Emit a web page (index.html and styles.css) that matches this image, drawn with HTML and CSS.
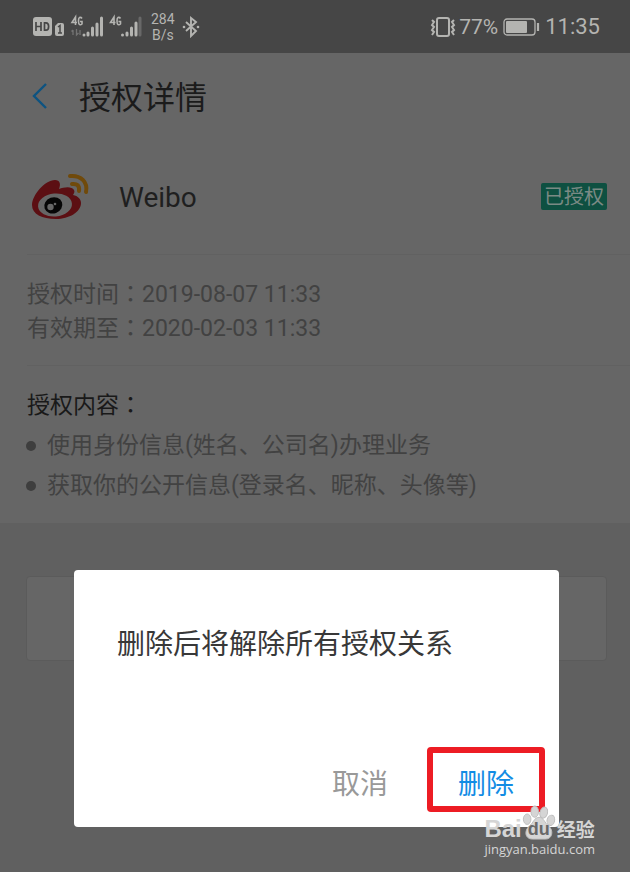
FILE: index.html
```html
<!DOCTYPE html>
<html lang="zh-CN">
<head>
<meta charset="utf-8">
<meta name="viewport" content="width=device-width, initial-scale=1">
<title>授权详情</title>
<link rel="stylesheet" href="styles.css">
</head>
<body>
<div class="statusbar">
  <div class="status-group">
    <svg class="signals" width="112" height="28" viewBox="0 0 112 28" aria-hidden="true">
      <rect x="1" y="4" width="19" height="19" rx="3" fill="#b4b4b1"/>
      <path d="M4 9v9M9 9v9M4 13.500h5M12.500 9v8.200h1.500c3.500 0 3.500-7.400 0-7.400h-1.500" fill="none" stroke="#464646" stroke-width="1.700"/>
      <path d="M23 13l3-3h4q2 0 2 2v9q0 2-2 2h-5q-2 0-2-2z" fill="#b4b4b1"/>
      <path d="M26 14l2-1.500V20M26 20h4" fill="none" stroke="#464646" stroke-width="1.500"/>
      <g fill="none" stroke="#b4b4b1" stroke-width="1.600">
        <path d="M43.500 12V4L40 9.500h5M50 5.500q-1-1.500-2.500-1Q46.500 5 46.500 8t1 3.500q2 .500 2.500-.500V8.500h-2"/>
        <path d="M82 12V4l-3.500 5.500h5M88.500 5.500q-1-1.500-2.500-1Q85 5 85 8t1 3.500q2 .500 2.500-.500V8.500h-2"/>
      </g>
      <g fill="none" stroke-width="3" stroke="#b4b4b1" stroke-linecap="round">
        <path d="M52 22v0M56 22v-2M60.500 22v-7M65 22V11M69.500 22V5"/>
        <path d="M90.500 22v0M95 22v-2M99.500 22v-7M104 22V10"/>
        <path d="M108 22V5" stroke="#686868"/>
      </g>
      <path d="M41 17v5M39.500 18.500L41 17M44.500 16v6l2-2M48 17v5" fill="none" stroke="#737373" stroke-width="1.300"/>
    </svg>
    <span class="speed">284<br>B/s</span>
    <svg width="18" height="22" viewBox="0 0 18 22" aria-hidden="true">
      <path d="M4 6l10 9-5 5V2l5 4-10 9" fill="none" stroke="#b4b4b1" stroke-width="1.900"/>
      <circle cx="2" cy="11" r="1.300" fill="#b4b4b1"/><circle cx="16" cy="11" r="1.300" fill="#b4b4b1"/>
    </svg>
  </div>
  <div class="status-group">
    <svg width="26" height="22" viewBox="0 0 26 22" fill="none" stroke="#b4b4b1" aria-hidden="true">
      <rect x="7" y="2" width="12" height="18" rx="2" stroke-width="2"/>
      <path d="M2 4l2 2-2 3 2 2-2 3 2 2-2 3M24 4l-2 2 2 3-2 2 2 3-2 2 2 3" stroke-width="2"/>
    </svg>
    <span class="battery-level">77%</span>
    <svg class="battery" width="37" height="20" viewBox="0 0 37 20" aria-hidden="true">
      <rect x="1" y="2" width="31" height="16" rx="3" fill="none" stroke="#b4b4b1" stroke-width="1.300"/>
      <rect x="3" y="4" width="21" height="12" rx="1" fill="#b4b4b1"/>
      <path d="M35 6v8" stroke="#b4b4b1" stroke-width="2.200"/>
    </svg>
    <span class="clock">11:35</span>
  </div>
</div>

<main class="detail">
  <header class="titlebar">
    <button class="back" type="button" aria-label="返回">
      <svg width="18" height="28" viewBox="0 0 18 28" aria-hidden="true"><path d="M15 2L3 14l12 12" fill="none" stroke="#0d5381" stroke-width="2.400"/></svg>
    </button>
    <h1>授权详情</h1>
  </header>

  <section class="app">
    <svg class="logo" width="60" height="48" viewBox="0 0 60 48" aria-hidden="true">
      <path d="M1 32C1 22 14 7 24 7c5 0 6 4 4 9 5-2 13-3 15 1 1 2 0 3-1 5 5 1 8 4 8 8 0 9-12 16-25 16C11 46 1 41 1 32z" fill="#5c0f13"/>
      <ellipse cx="24" cy="32" rx="17" ry="11.500" transform="rotate(-5 24 32)" fill="#666"/>
      <ellipse cx="22.500" cy="32.500" rx="9.200" ry="8" transform="rotate(-20 22 33)" fill="#060606"/>
      <circle cx="19.500" cy="34" r="3.200" fill="#666"/><circle cx="24" cy="31" r="1.300" fill="#666"/>
      <path d="M39 3c11-1 18 6 16 16M41 11q8-1 7 7" fill="none" stroke="#704a0b" stroke-width="4" stroke-linecap="round"/>
    </svg>
    <h2>Weibo</h2>
    <span class="badge">已授权</span>
  </section>

  <section class="dates">
    <p>授权时间<span class="colon" lang="zh-TW">：</span>2019-08-07 11:33</p>
    <p>有效期至<span class="colon" lang="zh-TW">：</span>2020-02-03 11:33</p>
  </section>

  <section class="scope">
    <h3>授权内容<span class="colon" lang="zh-TW">：</span></h3>
    <ul>
      <li>使用身份信息(姓名、公司名)办理业务</li>
      <li>获取你的公开信息(登录名、昵称、头像等)</li>
    </ul>
  </section>
</main>

<div class="under-card"></div>

<div class="dialog" role="dialog" aria-labelledby="dialog-text">
  <p id="dialog-text">删除后将解除所有授权关系</p>
  <div class="actions">
    <button class="cancel" type="button">取消</button>
    <button class="delete" type="button">删除</button>
  </div>
</div>

<div class="watermark">
  <div class="brand">
    <span class="bai">Bai</span>
    <span class="paw">
      <svg width="34" height="36" viewBox="0 0 34 38" aria-hidden="true">
        <g fill="#d5d5d5" stroke="#bdbdbd">
          <ellipse cx="4.500" cy="15" rx="4" ry="5.500"/><ellipse cx="12.500" cy="7" rx="4" ry="6"/>
          <ellipse cx="22" cy="8" rx="4" ry="6" transform="rotate(15 22 8)"/><ellipse cx="29.500" cy="16" rx="4" ry="5.500" transform="rotate(15 29 16)"/>
          <path d="M17 13c5 0 6 6 10 9 6 5 4 14-3 14H10c-8 0-9-9-3-14 4-3 5-9 10-9z"/>
        </g>
      </svg>
      <span class="du">du</span>
    </span>
    <span class="jingyan">经验</span>
  </div>
  <div class="site">jingyan.baidu.com</div>
</div>
</body>
</html>
```
FILE: styles.css
```css
* { box-sizing: border-box; }
body {
  position: relative;
  margin: 0;
  min-height: 100vh;
  background: #606060;
  color: #424242;
  font-family: Roboto, "Noto Sans CJK SC", sans-serif;
}
h1, h2, h3, p, ul { margin: 0; padding: 0; font-weight: 400; }
button {
  padding: 0;
  border: 0;
  background: none;
  font: inherit;
}
svg { display: block; }

.statusbar {
  display: flex;
  justify-content: space-between;
  height: 53px;
  padding: 0 30px 0 32px;
  background: #464646;
  color: #b4b4b1;
}
.status-group { display: flex; align-items: center; }
.speed {
  margin: 0 7px;
  font-size: 14px;
  line-height: 16px;
  text-align: center;
}
.battery-level { margin-left: 3px; font-size: 21px; }
.battery { margin: 0 5px; }
.clock { font-size: 22px; }

.detail { padding-bottom: 17px; background: #666; }
.titlebar {
  display: flex;
  align-items: center;
  height: 86px;
  padding-left: 31px;
  color: #1b1b1b;
}
.back { margin-right: 30px; }
h1 { padding-top: 4px; font-size: 32px; line-height: 48px; }

.app {
  display: flex;
  align-items: center;
  height: 116px;
  margin-left: 27px;
  padding: 0 23px 0 4px;
  border-bottom: 1px solid #616161;
}
h2 {
  flex: 1;
  margin-left: 28px;
  padding-top: 2px;
  color: #1f1f1f;
  font-size: 28px;
}
.badge {
  padding: 2px 3px 0;
  border-radius: 2px;
  background: #0e5041;
  color: #7a8a84;
  font-size: 20px;
  line-height: 25px;
}

.dates {
  margin-left: 27px;
  padding: 23px 0 19px;
  border-bottom: 1px solid #616161;
  font-size: 23px;
  line-height: 34px;
}
.colon {
  font-family: "Noto Sans CJK TC", sans-serif;
  line-height: 1;
}

.scope {
  padding: 20px 27px 0;
  font-size: 23px;
  line-height: 40px;
}
h3 { color: #191919; font-size: 23px; }
ul { list-style: none; }
li { display: flex; align-items: center; }
li::before {
  content: "";
  width: 10px;
  height: 10px;
  margin: 0 11px 0 -1px;
  border-radius: 50%;
  background: #3e3e3e;
}

.under-card {
  height: 85px;
  margin: 53px 23px 0 26px;
  border: 1px solid #5b5b5b;
  border-radius: 4px;
  background: #666;
}

.dialog {
  position: absolute;
  top: 570px;
  left: 74px;
  right: 71px;
  padding: 55px 14px 15px 43px;
  border-radius: 4px;
  background: #fff;
  color: #383838;
  font-size: 28px;
  line-height: 40px;
}
.actions {
  display: flex;
  justify-content: flex-end;
  gap: 39px;
  margin-top: 82px;
}
.actions button { padding-top: 10px; }
.cancel { color: #999; }
.delete {
  width: 118px;
  height: 65px;
  border: 6px solid #ed1c24;
  border-radius: 4px;
  color: #128ce4;
}

.watermark {
  position: absolute;
  top: 805px;
  right: 35px;
  color: #d5d5d5;
}
.brand {
  display: flex;
  align-items: flex-end;
  height: 36px;
  font: 700 24px/24px "Liberation Sans", sans-serif;
}
.paw { position: relative; }
.du {
  position: absolute;
  left: 6px;
  bottom: 0;
  color: #686868;
  font-size: 18px;
  line-height: 24px;
}
.jingyan {
  margin-left: 1px;
  font-family: "Noto Sans CJK SC", sans-serif;
  font-size: 19px;
  line-height: 24px;
}
.site { font: 13px/16px "Open Sans", sans-serif; }
```
